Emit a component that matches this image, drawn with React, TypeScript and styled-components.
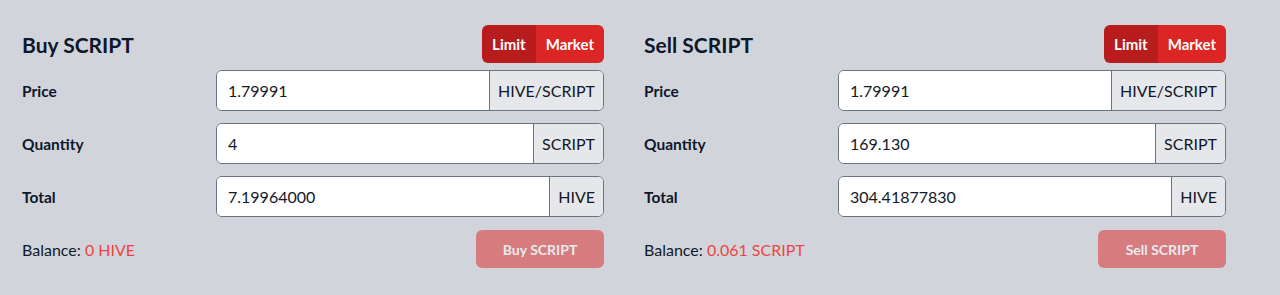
import React from 'react';
import styled, {createGlobalStyle} from 'styled-components';

const GlobalStyle = createGlobalStyle`
  html, body {
    margin: 0;
    padding: 0;
    background: #d1d5db;
    font-family: Lato, "Noto Sans", sans-serif;
    color: #111827;
  }
`;

interface OrderField {
  label: string;
  value: string;
  unit: string;
}

interface OrderFormProps {
  title: string;
  fields: OrderField[];
  balance: string;
  action: string;
}

const OrderForm: React.FC<OrderFormProps> = ({title, fields, balance, action}) => {
  return (
    <StyledPanel>
      <StyledHeader>
        <StyledTitle>{title}</StyledTitle>
        <StyledToggle>
          <StyledToggleButton active>Limit</StyledToggleButton>
          <StyledToggleButton>Market</StyledToggleButton>
        </StyledToggle>
      </StyledHeader>
      {fields.map((field) => (
        <StyledRow key={field.label}>
          <StyledLabel>{field.label}</StyledLabel>
          <StyledInputGroup>
            <StyledInput defaultValue={field.value} />
            <StyledAddon>{field.unit}</StyledAddon>
          </StyledInputGroup>
        </StyledRow>
      ))}
      <StyledFooter>
        <StyledBalance>
          Balance: <StyledBalanceValue>{balance}</StyledBalanceValue>
        </StyledBalance>
        <StyledSubmit disabled>{action}</StyledSubmit>
      </StyledFooter>
    </StyledPanel>
  );
};

const App: React.FC = () => {
  return (
    <>
      <GlobalStyle />
      <StyledPage>
        <OrderForm
          title="Buy SCRIPT"
          fields={[
            {label: 'Price', value: '1.79991', unit: 'HIVE/SCRIPT'},
            {label: 'Quantity', value: '4', unit: 'SCRIPT'},
            {label: 'Total', value: '7.19964000', unit: 'HIVE'},
          ]}
          balance="0 HIVE"
          action="Buy SCRIPT"
        />
        <OrderForm
          title="Sell SCRIPT"
          fields={[
            {label: 'Price', value: '1.79991', unit: 'HIVE/SCRIPT'},
            {label: 'Quantity', value: '169.130', unit: 'SCRIPT'},
            {label: 'Total', value: '304.41877830', unit: 'HIVE'},
          ]}
          balance="0.061 SCRIPT"
          action="Sell SCRIPT"
        />
      </StyledPage>
    </>
  );
};

const StyledPage = styled.div`
  display: grid;
  grid-template-columns: 582px 582px;
  column-gap: 40px;
  padding: 25px 0 0 22px;
  height: 295px;
  box-sizing: border-box;
`;

const StyledPanel = styled.div`
  display: flex;
  flex-direction: column;
`;

const StyledHeader = styled.div`
  display: flex;
  align-items: center;
  justify-content: space-between;
  height: 38px;
  margin-bottom: 7px;
`;

const StyledTitle = styled.h2`
  margin: 0;
  padding-top: 1px;
  font-size: 21px;
  font-weight: 700;
  color: #0f172a;
`;

const StyledToggle = styled.div`
  display: flex;
  height: 38px;
  border-radius: 6px;
  overflow: hidden;
`;

const StyledToggleButton = styled.button<{active?: boolean}>`
  border: none;
  margin: 0;
  padding: 0 10px;
  font-family: inherit;
  font-size: 15px;
  font-weight: 700;
  color: #fff;
  background: ${(props) => (props.active ? '#b91c1c' : '#dc2626')};
  cursor: pointer;
`;

const StyledRow = styled.div`
  display: grid;
  grid-template-columns: 194px 1fr;
  align-items: center;
  margin-bottom: 12px;
`;

const StyledLabel = styled.label`
  font-size: 15.5px;
  font-weight: 700;
  color: #0f172a;
`;

const StyledInputGroup = styled.div`
  display: flex;
  height: 41px;
  border: 1px solid #6b7280;
  border-radius: 6px;
  overflow: hidden;
  box-sizing: border-box;
  background: #fff;
`;

const StyledInput = styled.input`
  flex: 1;
  min-width: 0;
  border: none;
  outline: none;
  padding: 0 11px;
  font-family: inherit;
  font-size: 16px;
  color: #111827;
  background: #fff;
`;

const StyledAddon = styled.span`
  display: flex;
  align-items: center;
  padding: 0 8px;
  border-left: 1px solid #6b7280;
  background: #e5e7eb;
  font-size: 16px;
  color: #111827;
`;

const StyledFooter = styled.div`
  display: flex;
  align-items: center;
  justify-content: space-between;
  margin-top: 1px;
`;

const StyledBalance = styled.span`
  font-size: 16px;
  color: #111827;
`;

const StyledBalanceValue = styled.span`
  color: #ef4444;
`;

const StyledSubmit = styled.button`
  width: 128px;
  height: 38px;
  border: none;
  border-radius: 6px;
  font-family: inherit;
  font-size: 14px;
  font-weight: 700;
  color: #fff;
  background: #dc2626;
  opacity: 0.5;
`;

export default App;
